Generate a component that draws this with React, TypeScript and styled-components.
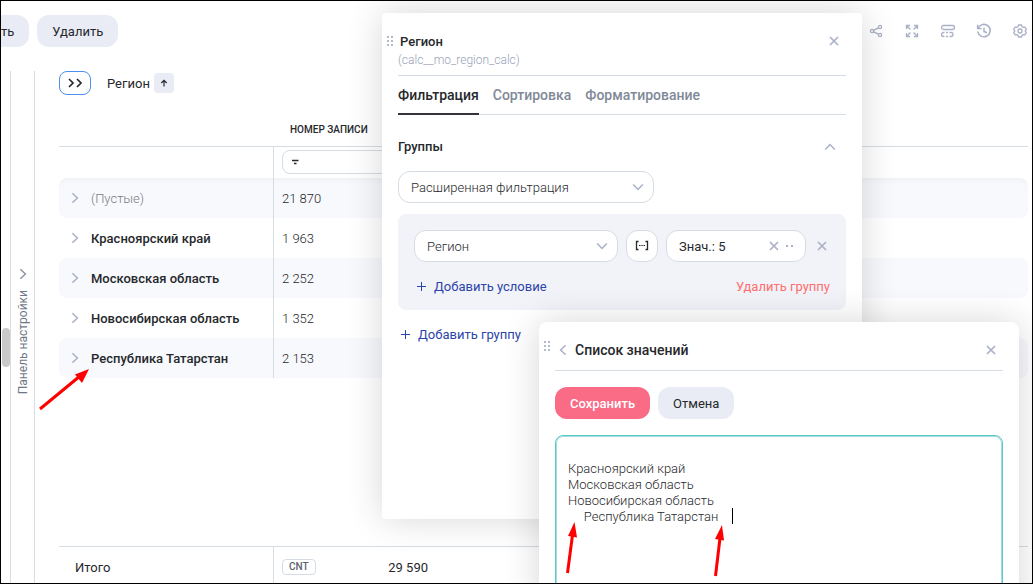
import React from 'react';
import styled, { createGlobalStyle, css } from 'styled-components';

const line = '#d5dce4';
const muted = '#aab0c6';

const Global = createGlobalStyle`
  *, *::before, *::after { box-sizing: border-box; }
  body {
    margin: 0;
    background: #fff;
    color: #26282c;
    font: 400 13px/16px Roboto, "Noto Sans", sans-serif;
  }
  button, input, select, textarea { font: inherit; color: inherit; margin: 0; }
  button { cursor: pointer; }
`;

const Page = styled.div`
  position: relative;
  display: flex;
  flex-direction: column;
  height: 100vh;
  overflow: hidden;
  border: 1px solid #000;
`;

/* ---------- icons ---------- */

const Svg = styled.svg`
  display: block;
  flex: none;
  fill: none;
  stroke: currentColor;
`;

const turns = { down: 0, up: 180, left: 90, right: 270 };

function Chevron({ dir }: { dir: keyof typeof turns }) {
  return (
    <Svg width={12} height={12} viewBox="0 0 12 12" strokeWidth={1.5} aria-hidden>
      <path d="M1.2 3.4 6 8.4l4.8-5" transform={`rotate(${turns[dir]} 6 6)`} />
    </Svg>
  );
}

function Cross() {
  return (
    <Svg width={10} height={10} viewBox="0 0 10 10" strokeWidth={1.7} aria-hidden>
      <path d="M1 1l8 8M9 1 1 9" />
    </Svg>
  );
}

function Plus() {
  return (
    <Svg width={10} height={12} viewBox="0 0 10 12" strokeWidth={1} aria-hidden>
      <path d="M5.500 1v9M1 5.500h9" />
    </Svg>
  );
}

function DragDots() {
  return (
    <Svg width={8} height={10} viewBox="0 0 8 10" aria-hidden>
      <path
        fill="currentColor"
        stroke="none"
        d="M0 0h2v2H0zM4 0h2v2H4zM0 4h2v2H0zM4 4h2v2H4zM0 8h2v2H0zM4 8h2v2H4z"
      />
    </Svg>
  );
}

/* ---------- toolbar ---------- */

const Toolbar = styled.header`
  display: flex;
  align-items: center;
  justify-content: space-between;
  flex: none;
  padding: 14px 4px 0 0;
`;

const ButtonRow = styled.div`
  display: flex;
  gap: 8px;
`;

const Button = styled.button<{ $primary?: boolean; $cut?: boolean }>`
  height: 32px;
  padding: 2px 15px 0;
  border: 0;
  border-radius: 12px;
  background: #e9ecf4;
  ${(p) => p.$primary && css`
    background: #fa6b86;
    color: #fff;
    font-weight: 500;
  `}
  ${(p) => p.$cut && css`
    padding-left: 0;
    border-radius: 0 12px 12px 0;
  `}
`;

const IconRow = styled.div`
  display: flex;
  gap: 20px;
`;

const IconButton = styled.button`
  display: grid;
  place-items: center;
  width: 16px;
  height: 16px;
  padding: 0;
  border: 0;
  background: none;
  color: ${muted};
`;

const toolIcons = [
  {
    name: 'Поделиться',
    art: (
      <>
        <circle cx="4" cy="8" r="1.6" />
        <circle cx="12" cy="4" r="1.6" />
        <circle cx="12" cy="12" r="1.6" />
        <path d="M5.600 7.300l4.800-2.500M5.600 8.800l4.800 2.400" />
      </>
    ),
  },
  {
    name: 'На весь экран',
    art: <path d="M2.500 6V2.500H6M2.500 2.500l4 4M10 2.500h3.500V6M13.500 2.500l-4 4M2.500 10v3.500H6M2.500 13.500l4-4M10 13.500h3.500V10M13.500 13.500l-4-4" />,
  },
  {
    name: 'Строки',
    art: (
      <>
        <rect x="1.500" y="2.500" width="13" height="4" rx="2" />
        <path d="M4.500 9.500H3.500a2 2 0 0 0 0 4h1M6 9.500h2M6 13.500h2M9.500 9.500h1.500a2 2 0 0 1 0 4H9.500" />
      </>
    ),
  },
  {
    name: 'История',
    art: (
      <>
        <path strokeWidth="1.600" d="M2.200 5.200a6.200 6.200 0 1 1-.4 3.300" />
        <path strokeWidth="1.500" d="M1.600 1.800v3.800h4" />
        <path strokeWidth="1.500" d="M8 4.800v3.600l3 1.400" />
      </>
    ),
  },
  {
    name: 'Настройки',
    art: (
      <>
        <circle cx="8" cy="8" r="2" />
        <path d="M6.600 2h2.800l.6 1.700 1.300.7 1.700-.3 1.300 2.400L13.200 8l1.100 1.500-1.300 2.400-1.700-.3-1.300.7-.6 1.700H6.600L6 12.300l-1.300-.7-1.700.3-1.300-2.400L2.800 8 1.700 6.500 3 4.100l1.700.3L6 3.700z" />
      </>
    ),
  },
];

/* ---------- work area ---------- */

const Work = styled.div`
  display: flex;
  flex: 1;
  min-height: 0;
  margin-top: 24px;
`;

const ScrollStrip = styled.div`
  display: flex;
  flex: none;
  width: 10px;
  padding: 257px 0 0 1px;
  border-right: 1px solid ${line};
`;

const Thumb = styled.div`
  width: 8px;
  height: 39px;
  border-radius: 4px;
  background: #c9c9c9;
`;

const SettingsRail = styled.aside`
  flex: none;
  width: 24px;
  border-right: 1px solid ${line};
`;

const RailButton = styled.button`
  display: flex;
  flex-direction: column;
  align-items: center;
  gap: 10px;
  width: 100%;
  padding: 197px 0 0;
  border: 0;
  background: none;
  color: #8d94a5;
`;

const RailLabel = styled.span`
  writing-mode: vertical-rl;
  transform: rotate(180deg);
  color: #6f7787;
  font-size: 12px;
`;

const Grid = styled.main`
  display: flex;
  flex: 1;
  flex-direction: column;
  min-width: 0;
  padding: 0 4px 0 24px;
`;

const GroupBar = styled.div`
  display: flex;
  align-items: center;
  height: 24px;
  flex: none;
`;

const GroupName = styled.span`
  padding-top: 2px;
`;

const ExpandButton = styled.button`
  display: flex;
  align-items: center;
  justify-content: center;
  width: 32px;
  height: 24px;
  margin-right: 16px;
  padding: 0;
  border: 1px solid #4a90ee;
  border-radius: 8px;
  background: #fff;
`;

const SortButton = styled.button`
  display: grid;
  place-items: center;
  width: 20px;
  height: 20px;
  margin-left: 4px;
  padding: 0;
  border: 0;
  border-radius: 4px;
  background: #e9ecf4;
`;

const Table = styled.table`
  width: 100%;
  border-collapse: separate;
  border-spacing: 0;
  table-layout: fixed;
`;

const NameCol = styled.col`
  width: 215px;
`;

const CountCol = styled.col`
  width: 162px;
`;

const HeadCell = styled.th`
  height: 52px;
  padding: 18px 16px 0;
  border-bottom: 1px solid ${line};
  text-align: left;
  font-size: 10px;
  font-weight: 500;
  text-transform: uppercase;
  white-space: nowrap;
`;

const FilterCell = styled.td<{ $divided?: boolean }>`
  height: 31px;
  padding: 0 8px 1px;
  border-right: ${(p) => (p.$divided ? `1px solid ${line}` : 0)};
`;

const Cell = styled.td<{ $divided?: boolean }>`
  height: 40px;
  padding: 2px 8px 0;
  border-right: ${(p) => (p.$divided ? `1px solid ${line}` : 0)};
  font-weight: 300;
`;

const DataRow = styled.tr`
  &:nth-child(odd) td { background: #f8f9fd; }
  &:first-child td { box-shadow: inset 0 8px 8px -8px rgba(0, 0, 0, 0.06); }
  td:first-child { border-radius: 8px 0 0 8px; }
  td:last-child { border-radius: 0 8px 8px 0; }
`;

const RegionLabel = styled.span<{ $empty?: boolean }>`
  display: flex;
  align-items: center;
  gap: 10px;
  padding-left: 2px;
  font-weight: ${(p) => (p.$empty ? 300 : 500)};
  color: ${(p) => (p.$empty ? '#777a80' : 'inherit')};
`;

const RowChevron = styled.span`
  padding-bottom: 2px;
  color: ${muted};
`;

const FilterBox = styled.label`
  display: flex;
  align-items: center;
  height: 24px;
  padding-left: 8px;
  border: 1px solid ${line};
  border-radius: 8px;
`;

const FilterInput = styled.input`
  flex: 1;
  min-width: 0;
  border: 0;
  outline: 0;
  background: none;
`;

const Totals = styled.div`
  flex: none;
  height: 37px;
  margin-top: auto;
  border-top: 1px solid ${line};
`;

const TotalTitle = styled.span`
  padding-left: 8px;
  font-weight: 400;
`;

const TotalValue = styled.span`
  display: flex;
  align-items: center;
  justify-content: space-between;
  font-weight: 400;
`;

const Tag = styled.span`
  margin-bottom: 3px;
  padding: 0 6px;
  border: 1px solid ${line};
  border-radius: 4px;
  color: #5b6270;
  font-size: 10px;
  line-height: 14px;
  font-weight: 500;
`;

/* ---------- floating panels ---------- */

const Panel = styled.section<{ $left: number; $top: number; $height: number; $round: number }>`
  position: absolute;
  left: ${(p) => p.$left}px;
  top: ${(p) => p.$top}px;
  width: 480px;
  height: ${(p) => p.$height}px;
  padding: 0 16px;
  border-radius: ${(p) => p.$round}px;
  background: #fff;
  box-shadow: 0 0 36px rgba(0, 0, 0, 0.16);
`;

const Grip = styled.span<{ $top: number }>`
  position: absolute;
  left: 5px;
  top: ${(p) => p.$top}px;
  color: #b4b9cb;
`;

const FieldHead = styled.div`
  display: flex;
  align-items: flex-start;
  justify-content: space-between;
  height: 63px;
  padding: 20px 4px 0 0;
  border-bottom: 1px solid ${line};
`;

const ListHead = styled.div`
  display: flex;
  align-items: center;
  justify-content: space-between;
  height: 49px;
  padding: 8px 4px 0 0;
  border-bottom: 1px solid ${line};
`;

const Title = styled.h2<{ $large?: boolean; $inset?: boolean }>`
  display: flex;
  align-items: center;
  gap: 4px;
  margin: 0;
  padding-left: ${(p) => (p.$inset ? 2 : 0)}px;
  font-size: ${(p) => (p.$large ? 14 : 13)}px;
  line-height: 18px;
  font-weight: 500;
`;

const Code = styled.div`
  color: #999fb8;
  font-size: 12px;
  line-height: 18px;
  font-weight: 300;
`;

const Tabs = styled.div`
  display: flex;
  gap: 14px;
  border-bottom: 1px solid ${line};
`;

const Tab = styled.button<{ $active?: boolean }>`
  height: 39px;
  margin-bottom: -1px;
  padding: 0;
  border: 0;
  border-bottom: 2px solid ${(p) => (p.$active ? '#33353b' : 'transparent')};
  background: none;
  color: ${(p) => (p.$active ? '#26282c' : '#7f8998')};
  font-size: 14px;
  font-weight: 500;
`;

const GroupHead = styled.div`
  display: flex;
  align-items: center;
  justify-content: space-between;
  height: 56px;
  padding: 8px 8px 0 0;
`;

const SelectWrap = styled.div<{ $width: number }>`
  display: flex;
  align-items: center;
  width: ${(p) => p.$width}px;
  height: 32px;
  padding-right: 9px;
  border: 1px solid ${line};
  border-radius: 12px;
  background: #fff;
  color: ${muted};
`;

const Select = styled.select`
  flex: 1;
  height: 100%;
  padding: 2px 12px 0;
  border: 0;
  outline: 0;
  appearance: none;
  background: none;
  color: #26282c;
  font-weight: 300;
`;

const GroupCard = styled.div`
  display: flex;
  flex-direction: column;
  gap: 16px;
  height: 96px;
  margin: 11px 0 16px;
  padding: 16px;
  border-radius: 8px;
  background: #f2f3f8;
`;

const Condition = styled.div`
  display: flex;
  align-items: center;
  gap: 8px;
`;

const Operator = styled.button`
  display: grid;
  place-items: center;
  width: 32px;
  height: 32px;
  padding: 0;
  border: 1px solid ${line};
  border-radius: 12px;
  background: #fff;
`;

const ValueBox = styled.div`
  display: flex;
  align-items: center;
  width: 140px;
  height: 32px;
  padding: 0 7px 0 12px;
  border: 1px solid ${line};
  border-radius: 12px;
  background: #fff;
`;

const ValueInput = styled.input`
  flex: 1;
  width: 0;
  padding: 2px 0 0;
  border: 0;
  outline: 0;
  background: none;
`;

const Actions = styled.div`
  display: flex;
  justify-content: space-between;
`;

const TextButton = styled.button<{ $danger?: boolean }>`
  display: flex;
  align-items: center;
  gap: 8px;
  padding: ${(p) => (p.$danger ? '1px 0 0' : '1px 0 0 2px')};
  border: 0;
  background: none;
  color: ${(p) => (p.$danger ? '#ff6e6e' : '#2c44a8')};
`;

const SaveRow = styled.div`
  display: flex;
  gap: 8px;
  padding: 16px 0;
`;

const Values = styled.textarea`
  display: block;
  width: 100%;
  height: 200px;
  padding: 9px 12px;
  border: 1px solid #5cc8c4;
  border-radius: 8px;
  outline: 0;
  box-shadow: inset 0 0 0 1px #a5dfdd;
  resize: none;
  background: #fff;
  color: #26282c;
  font-weight: 300;
`;

const Caret = styled.span`
  position: absolute;
  left: 193px;
  top: 186px;
  width: 1px;
  height: 16px;
  background: #000;
`;

/* ---------- red pointers laid over the screen ---------- */

const Pointer = styled.svg<{ $x: number; $y: number }>`
  position: absolute;
  left: ${(p) => p.$x}px;
  top: ${(p) => p.$y}px;
  fill: #f00;
  stroke: #f00;
  pointer-events: none;
`;

const regions = [
  { name: '(Пустые)', count: '21 870', empty: true },
  { name: 'Красноярский край', count: '1 963' },
  { name: 'Московская область', count: '2 252' },
  { name: 'Новосибирская область', count: '1 352' },
  { name: 'Республика Татарстан', count: '2 153' },
];

const listText =
  '\nКрасноярский край\nМосковская область\nНовосибирская область\n     Республика Татарстан     ';

function Columns() {
  return (
    <colgroup>
      <NameCol />
      <CountCol />
      <col />
    </colgroup>
  );
}

function RegionTable() {
  return (
    <Table>
      <Columns />
      <thead>
        <tr>
          <HeadCell aria-label="Регион" />
          <HeadCell>Номер записи</HeadCell>
          <HeadCell aria-label="Прочее" />
        </tr>
      </thead>
      <tbody>
        <tr>
          <FilterCell $divided />
          <FilterCell>
            <FilterBox>
              <Svg width={8} height={8} viewBox="0 0 8 8" strokeWidth={1.4} aria-hidden>
                <path d="M1 2.500h6.500M3 5.500h2.500" />
              </Svg>
              <FilterInput aria-label="Фильтр по номеру записи" />
            </FilterBox>
          </FilterCell>
          <FilterCell />
        </tr>
      </tbody>
      <tbody>
        {regions.map((r) => (
          <DataRow key={r.name}>
            <Cell $divided>
              <RegionLabel $empty={r.empty}>
                <RowChevron>
                  <Chevron dir="right" />
                </RowChevron>
                {r.name}
              </RegionLabel>
            </Cell>
            <Cell>{r.count}</Cell>
            <Cell />
          </DataRow>
        ))}
      </tbody>
    </Table>
  );
}

function FilterPanel() {
  return (
    <Panel $left={381} $top={12} $height={506} $round={4}>
      <Grip $top={23}>
        <DragDots />
      </Grip>
      <FieldHead>
        <div>
          <Title $inset>Регион</Title>
          <Code>(calc__mo_region_calc)</Code>
        </div>
        <IconButton aria-label="Закрыть">
          <Cross />
        </IconButton>
      </FieldHead>
      <Tabs role="tablist">
        <Tab role="tab" aria-selected $active>Фильтрация</Tab>
        <Tab role="tab">Сортировка</Tab>
        <Tab role="tab">Форматирование</Tab>
      </Tabs>
      <GroupHead>
        <Title>Группы</Title>
        <IconButton aria-label="Свернуть">
          <Chevron dir="up" />
        </IconButton>
      </GroupHead>
      <SelectWrap $width={256}>
        <Select aria-label="Вид фильтрации">
          <option>Расширенная фильтрация</option>
        </Select>
        <Chevron dir="down" />
      </SelectWrap>
      <GroupCard>
        <Condition>
          <SelectWrap $width={204}>
            <Select aria-label="Поле">
              <option>Регион</option>
            </Select>
            <Chevron dir="down" />
          </SelectWrap>
          <Operator aria-label="В списке">
            <Svg width={14} height={12} viewBox="0 0 14 12" strokeWidth={1.3} aria-hidden>
              <path d="M3.500 1.500h-2v8h2M10.500 1.500h2v8h-2" />
              <path strokeWidth={1} d="M4 5.500h1.500M6.300 5.500h1.400M8.500 5.500H10" />
            </Svg>
          </Operator>
          <ValueBox>
            <ValueInput aria-label="Значения" readOnly value="Знач.: 5" />
            <IconButton aria-label="Очистить">
              <Cross />
            </IconButton>
            <IconButton aria-label="Открыть список">
              <Svg width={8} height={2} viewBox="0 0 8 2" aria-hidden>
                <path fill="currentColor" stroke="none" d="M0 0h2v2H0zM5 0h2v2H5z" />
              </Svg>
            </IconButton>
          </ValueBox>
          <IconButton aria-label="Удалить условие">
            <Cross />
          </IconButton>
        </Condition>
        <Actions>
          <TextButton>
            <Plus />
            Добавить условие
          </TextButton>
          <TextButton $danger>Удалить группу</TextButton>
        </Actions>
      </GroupCard>
      <TextButton>
        <Plus />
        Добавить группу
      </TextButton>
    </Panel>
  );
}

function ValuesPanel() {
  return (
    <Panel $left={538} $top={321} $height={380} $round={8}>
      <Grip $top={19}>
        <DragDots />
      </Grip>
      <ListHead>
        <Title $large>
          <IconButton aria-label="Назад">
            <Chevron dir="left" />
          </IconButton>
          Список значений
        </Title>
        <IconButton aria-label="Закрыть">
          <Cross />
        </IconButton>
      </ListHead>
      <SaveRow>
        <Button $primary>Сохранить</Button>
        <Button>Отмена</Button>
      </SaveRow>
      <Values aria-label="Список значений" defaultValue={listText} />
      <Caret />
    </Panel>
  );
}

export default function App() {
  return (
    <>
      <Global />
      <Page>
        <Toolbar>
          <ButtonRow>
            <Button $cut>ть</Button>
            <Button>Удалить</Button>
          </ButtonRow>
          <IconRow>
            {toolIcons.map((t) => (
              <IconButton key={t.name} aria-label={t.name}>
                <Svg width={16} height={16} viewBox="0 0 16 16" strokeWidth={1.3}>
                  {t.art}
                </Svg>
              </IconButton>
            ))}
          </IconRow>
        </Toolbar>
        <Work>
          <ScrollStrip>
            <Thumb />
          </ScrollStrip>
          <SettingsRail>
            <RailButton>
              <Chevron dir="right" />
              <RailLabel>Панель настройки</RailLabel>
            </RailButton>
          </SettingsRail>
          <Grid>
            <GroupBar>
              <ExpandButton aria-label="Развернуть все">
                <Svg width={16} height={10} viewBox="0 0 16 10" strokeWidth={1.7}>
                  <path d="M2 1l4 4-4 4M10 1l4 4-4 4" />
                </Svg>
              </ExpandButton>
              <GroupName>Регион</GroupName>
              <SortButton aria-label="По возрастанию">
                <Svg width={8} height={8} viewBox="0 0 8 8" strokeWidth={1.2}>
                  <path d="M4 7.500V1.500M1.300 4 4 1.300 6.700 4" />
                </Svg>
              </SortButton>
            </GroupBar>
            <RegionTable />
            <Totals>
              <Table>
                <Columns />
                <tbody>
                  <tr>
                    <Cell $divided>
                      <TotalTitle>Итого</TotalTitle>
                    </Cell>
                    <Cell>
                      <TotalValue>
                        <Tag>CNT</Tag>
                        29 590
                      </TotalValue>
                    </Cell>
                    <Cell />
                  </tr>
                </tbody>
              </Table>
            </Totals>
          </Grid>
        </Work>
        <FilterPanel />
        <ValuesPanel />
        <Pointer $x={37} $y={366} width={54} height={46} viewBox="38 367 54 46" aria-hidden>
          <path d="M40 409 80 376" strokeWidth={3} />
          <path d="M89 369 75 374.500 82 383z" stroke="none" />
        </Pointer>
        <Pointer $x={563} $y={519} width={18} height={58} viewBox="564 520 18 58" aria-hidden>
          <path d="M567.500 573 572.500 535" strokeWidth={3} />
          <path d="M574.500 522 568 536 577 537.500z" stroke="none" />
        </Pointer>
        <Pointer $x={711} $y={522} width={18} height={58} viewBox="712 523 18 58" aria-hidden>
          <path d="M715.500 576 720 538" strokeWidth={3} />
          <path d="M722 525 715 539 724 540.500z" stroke="none" />
        </Pointer>
      </Page>
    </>
  );
}
